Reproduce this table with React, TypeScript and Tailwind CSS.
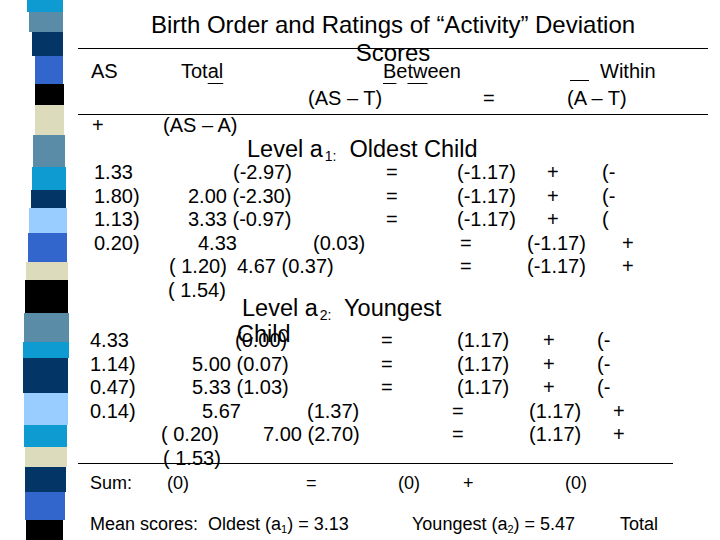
import type { ReactNode } from 'react';

const stripe = [
  'h-[12px] ml-[27px] w-[36px] bg-[#0d9bd2]',
  'h-[20px] ml-[29px] w-[34px] bg-[#5a8ca8]',
  'h-[24px] ml-[32px] w-[31px] bg-[#033566]',
  'h-[28px] ml-[35px] w-[28px] bg-[#3366cc]',
  'h-[21px] ml-[35px] w-[29px] bg-[#000000]',
  'h-[30px] ml-[35px] w-[29px] bg-[#dcdcbc]',
  'h-[32px] ml-[33px] w-[32px] bg-[#5a8ca8]',
  'h-[23px] ml-[32px] w-[34px] bg-[#0d9bd2]',
  'h-[18px] ml-[31px] w-[35px] bg-[#033566]',
  'h-[25px] ml-[29px] w-[38px] bg-[#99ccff]',
  'h-[29px] ml-[28px] w-[39px] bg-[#3366cc]',
  'h-[18px] ml-[26px] w-[42px] bg-[#dcdcbc]',
  'h-[33px] ml-[25px] w-[43px] bg-[#000000]',
  'h-[29px] ml-[24px] w-[45px] bg-[#5a8ca8]',
  'h-[16px] ml-[23px] w-[46px] bg-[#0d9bd2]',
  'h-[35px] ml-[23px] w-[45px] bg-[#033566]',
  'h-[32px] ml-[24px] w-[44px] bg-[#99ccff]',
  'h-[22px] ml-[24px] w-[43px] bg-[#0d9bd2]',
  'h-[20px] ml-[25px] w-[42px] bg-[#dcdcbc]',
  'h-[25px] ml-[25px] w-[41px] bg-[#033566]',
  'h-[28px] ml-[25px] w-[40px] bg-[#3366cc]',
  'h-[20px] ml-[26px] w-[37px] bg-[#000000]',
];

function Row({ className, children }: { className: string; children: ReactNode }) {
  return <div className={'flex items-center shrink-0 whitespace-pre leading-none ' + className}>{children}</div>;
}

function Sub({ children }: { children: ReactNode }) {
  return <span className="relative top-[4px] ml-[2px] text-[14px]">{children}</span>;
}

export default function App() {
  return (
    <div className="flex w-[720px] h-[540px] overflow-hidden bg-white text-black font-['Liberation_Sans',Arial,sans-serif]">
      {/* side stripe */}
      <div className="w-[78px] shrink-0 flex flex-col">
        {stripe.map((c, i) => (
          <div key={i} className={c} />
        ))}
      </div>

      <div className="flex flex-col text-[20px]">
        {/* title */}
        <div className="h-[48px] w-[630px] pt-[11px] text-center text-[24px] leading-[28px] shrink-0">
          Birth Order and Ratings of “Activity” Deviation
          <br />
          Scores
        </div>
        <div className="h-px w-[630px] bg-black shrink-0" />

        <Row className="mt-[10px] h-[24px] pl-[13px]">
          <span className="w-[90px]">AS</span>
          <span className="w-[202px]">
            Tot<span className="underline decoration-1 underline-offset-[5px]">al</span>
          </span>
          <span className="w-[187px]">
            <span className="underline decoration-1 underline-offset-[5px]">B</span>e
            <span className="underline decoration-1 underline-offset-[5px]">tw</span>een
          </span>
          <span className="w-[30px] h-full flex items-end">
            <span className="w-[19px] h-px bg-black mb-[2px]" />
          </span>
          <span>Within</span>
        </Row>

        <Row className="mt-[3px] h-[24px] pl-[230px]">
          <span className="w-[175px]">(AS – T)</span>
          <span className="w-[84px]">=</span>
          <span>(A – T)</span>
        </Row>

        <div className="mt-[4px] h-px w-[630px] bg-black shrink-0" />

        <Row className="h-[20px] pl-[14px]">
          <span className="w-[71px]">+</span>
          <span>(AS – A)</span>
        </Row>

        <Row className="mt-[5px] h-[20px] pl-[169px] text-[23.5px]">
          <span>
            Level a<Sub>1:</Sub>  Oldest Child
          </span>
        </Row>

        {/* oldest child rows */}
        <Row className="mt-[0.2px] h-[23.6px] pl-[16px]">
          <span className="w-[139px]">1.33</span>
          <span className="w-[153px]">(-2.97)</span>
          <span className="w-[71px]">=</span>
          <span className="w-[90px]">(-1.17)</span>
          <span className="w-[55px]">+</span>
          <span>(-</span>
        </Row>
        <Row className="h-[23.6px] pl-[16px]">
          <span className="w-[94px]">1.80)</span>
          <span className="w-[198px]">2.00 (-2.30)</span>
          <span className="w-[71px]">=</span>
          <span className="w-[90px]">(-1.17)</span>
          <span className="w-[55px]">+</span>
          <span>(-</span>
        </Row>
        <Row className="h-[23.6px] pl-[16px]">
          <span className="w-[94px]">1.13)</span>
          <span className="w-[198px]">3.33 (-0.97)</span>
          <span className="w-[71px]">=</span>
          <span className="w-[90px]">(-1.17)</span>
          <span className="w-[55px]">+</span>
          <span>(</span>
        </Row>
        <Row className="h-[23.6px] pl-[16px]">
          <span className="w-[104px]">0.20)</span>
          <span className="w-[115px]">4.33</span>
          <span className="w-[147px]">(0.03)</span>
          <span className="w-[67px]">=</span>
          <span className="w-[95px]">(-1.17)</span>
          <span>+</span>
        </Row>
        <Row className="h-[23.6px] pl-[91px]">
          <span className="w-[68px]">( 1.20)</span>
          <span className="w-[223px]">4.67 (0.37)</span>
          <span className="w-[67px]">=</span>
          <span className="w-[95px]">(-1.17)</span>
          <span>+</span>
        </Row>
        <Row className="h-[23.6px] pl-[90px]">
          <span>( 1.54)</span>
        </Row>

        <Row className="mt-[0.2px] h-[14px] pl-[164px] text-[23.5px]">
          <span>
            Level a<Sub>2:</Sub>  Youngest
          </span>
        </Row>
        <Row className="mt-[19px] h-0 pl-[159px] text-[23.5px]">
          <span>Child</span>
        </Row>

        {/* youngest child rows */}
        <Row className="mt-[-6.8px] h-[23.6px] pl-[12px]">
          <span className="w-[145px]">4.33</span>
          <span className="w-[146px]">(0.00)</span>
          <span className="w-[76px]">=</span>
          <span className="w-[86px]">(1.17)</span>
          <span className="w-[54px]">+</span>
          <span>(-</span>
        </Row>
        <Row className="h-[23.6px] pl-[12px]">
          <span className="w-[102px]">1.14)</span>
          <span className="w-[189px]">5.00 (0.07)</span>
          <span className="w-[76px]">=</span>
          <span className="w-[86px]">(1.17)</span>
          <span className="w-[54px]">+</span>
          <span>(-</span>
        </Row>
        <Row className="h-[23.6px] pl-[12px]">
          <span className="w-[102px]">0.47)</span>
          <span className="w-[189px]">5.33 (1.03)</span>
          <span className="w-[76px]">=</span>
          <span className="w-[86px]">(1.17)</span>
          <span className="w-[54px]">+</span>
          <span>(-</span>
        </Row>
        <Row className="h-[23.6px] pl-[12px]">
          <span className="w-[112px]">0.14)</span>
          <span className="w-[105px]">5.67</span>
          <span className="w-[145px]">(1.37)</span>
          <span className="w-[77px]">=</span>
          <span className="w-[84px]">(1.17)</span>
          <span>+</span>
        </Row>
        <Row className="h-[23.6px] pl-[83px]">
          <span className="w-[102px]">( 0.20)</span>
          <span className="w-[189px]">7.00 (2.70)</span>
          <span className="w-[77px]">=</span>
          <span className="w-[84px]">(1.17)</span>
          <span>+</span>
        </Row>
        <Row className="h-[23.6px] pl-[85px]">
          <span>( 1.53)</span>
        </Row>

        <div className="mt-[-7px] h-px w-[595px] bg-black shrink-0" />

        <Row className="mt-[9.2px] h-[20px] pl-[12px] text-[18px]">
          <span className="w-[77px]">Sum:</span>
          <span className="w-[139px]">(0)</span>
          <span className="w-[92px]">=</span>
          <span className="w-[65px]">(0)</span>
          <span className="w-[102px]">+</span>
          <span>(0)</span>
        </Row>

        <Row className="mt-[21px] h-[20px] pl-[12px] text-[18px]">
          <span className="w-[322px]">
            Mean scores:  Oldest (a<span className="relative top-[3px] text-[11px]">1</span>) = 3.13
          </span>
          <span className="w-[208px]">
            Youngest (a<span className="relative top-[3px] text-[11px]">2</span>) = 5.47
          </span>
          <span>Total</span>
        </Row>
      </div>
    </div>
  );
}
